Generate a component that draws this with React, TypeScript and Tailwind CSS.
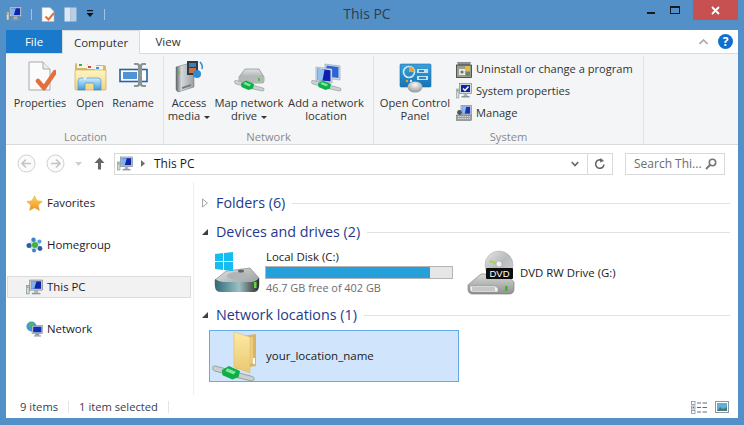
import { ReactNode } from 'react';

function MiniPc({ size = 16 }: { size?: number }) {
  return (
    <svg width={size} height={size} viewBox="0 0 16 16" className="shrink-0">
      <rect x="0.5" y="6" width="2.5" height="8" fill="#d5dadc" stroke="#7d8a8c" strokeWidth="0.6" />
      <rect x="1.2" y="7" width="1" height="1.5" fill="#46c13f" />
      <rect x="3.5" y="1" width="12" height="9.5" fill="#cfd3d6" stroke="#6f7a80" strokeWidth="0.6" />
      <rect x="4.8" y="2.2" width="9.4" height="7" fill="#0f25a8" />
      <path d="M4.8 2.2h5l-2 7h-3z" fill="#7fb2ee" />
      <path d="M8 10.5h3l.6 2.5H7.4z" fill="#aab2b6" />
      <rect x="5.5" y="13" width="8" height="1.4" fill="#8d969b" />
    </svg>
  );
}

function Plug({ x = 0, y = 0 }: { x?: number; y?: number }) {
  return (
    <g transform={`translate(${x} ${y})`}>
      <path d="M0.5 2.5q0-1.5 2-1L12 4l6 2 11 3q1.5.6 1 2t-2 1l-11-2.5-6-2-9-2.5q-1.5-.5-1.5-2z" fill="#c9d2d1" stroke="#8b9695" strokeWidth="0.6" />
      <path d="M7 4.5l5-3 8 3.5-1 4.5-4.500 1.500-7-3z" fill="#0fae48" />
      <path d="M11 3l6 2.500-1.500 2-6-2.500z" fill="#7fe79b" />
    </g>
  );
}

function PropertiesIcon() {
  return (
    <svg width="28" height="30" viewBox="0 0 28 30" className="mb-[2px] ml-[3px]">
      <path d="M1 1h14l7 7v21H1z" fill="#fbfbfb" stroke="#a9a9a9" />
      <path d="M15 1v7h7" fill="#ececec" stroke="#a9a9a9" />
      <path d="M10 20l6 7L27 11" fill="none" stroke="#e2703f" strokeWidth="4.5" strokeLinecap="round" strokeLinejoin="round" />
    </svg>
  );
}

function OpenIcon() {
  return (
    <svg width="33" height="30" viewBox="0 0 33 30" className="mb-[2px]">
      <defs>
        <linearGradient id="folderFace" x1="0" y1="0" x2="0" y2="1">
          <stop offset="0" stopColor="#fff6c4" />
          <stop offset="1" stopColor="#f0d582" />
        </linearGradient>
        <linearGradient id="glass" x1="0" y1="0" x2="0" y2="1">
          <stop offset="0" stopColor="#cfeefc" />
          <stop offset="1" stopColor="#3f9bdc" />
        </linearGradient>
      </defs>
      <path d="M1 4q0-2 2-2h9l2 2h16q2 0 2 2v22H1z" fill="#d9b868" />
      <rect x="3" y="2" width="10" height="5" fill="#f5f5f0" />
      <rect x="5" y="3" width="3" height="2" fill="#3cb03c" />
      <rect x="13" y="4" width="9" height="4" fill="#f5f5f0" />
      <rect x="14" y="5" width="3" height="2" fill="#d24b35" />
      <rect x="21" y="5" width="8" height="4" fill="#f5f5f0" />
      <rect x="22" y="6" width="3" height="2" fill="#3c94da" />
      <path d="M1 9h31v19q0 1-1 1H2q-1 0-1-1z" fill="url(#folderFace)" stroke="#cda95a" strokeWidth="0.7" />
      <path d="M4 29v-9q0-3 3-3h17q3 0 3 3v9h-7v-6q0-1-1-1H12q-1 0-1 1v6z" fill="url(#glass)" stroke="#3f87bd" strokeWidth="0.6" />
      <path d="M8 14l3 3 3-3-3 5z" fill="#fff" />
    </svg>
  );
}

function RenameIcon() {
  return (
    <svg width="29" height="27" viewBox="0 0 29 27" className="mb-[4px]">
      <rect x="1" y="7.5" width="27" height="12" fill="#fff" stroke="#2364a5" strokeWidth="1.6" />
      <rect x="4" y="10" width="14" height="7" fill="#4f95d6" />
      <path d="M15 1h4l2 1.5L23 1h4v2h-3l-1 1v18l1 1h3v2h-4l-2-1.5-2 1.5h-4v-2h3l1-1V4l-1-1h-3z" fill="#8d9498" />
    </svg>
  );
}

function AccessMediaIcon() {
  return (
    <svg width="30" height="33" viewBox="0 0 30 33">
      <defs>
        <linearGradient id="tower" x1="0" y1="0" x2="1" y2="0">
          <stop offset="0" stopColor="#5f6467" />
          <stop offset="0.3" stopColor="#d5d8da" />
          <stop offset="1" stopColor="#9b9fa2" />
        </linearGradient>
      </defs>
      <path d="M2 7l18-5v25l-16 5-2-2z" fill="url(#tower)" stroke="#6d7174" strokeWidth="0.5" />
      <rect x="3.5" y="11" width="2" height="3" fill="#4cc04a" />
      <path d="M8 27l9-3v2l-9 3z" fill="#777b7e" />
      <rect x="13" y="1" width="11" height="14" fill="#2f3b45" />
      <rect x="15" y="3" width="7" height="4" fill="#3d7eb5" />
      <rect x="15" y="8" width="7" height="5" fill="#d0703e" />
      <circle cx="23" cy="14" r="4" fill="#2c8ad6" />
      <path d="M26 2q3 3 2 7" fill="none" stroke="#2c8ad6" strokeWidth="1.5" />
    </svg>
  );
}

function MapDriveIcon() {
  return (
    <svg width="33" height="24" viewBox="0 0 33 24" className="mb-[1px]">
      <defs>
        <linearGradient id="hddGrey" x1="0" y1="0" x2="0" y2="1">
          <stop offset="0" stopColor="#e0e2e2" />
          <stop offset="1" stopColor="#8b8f8f" />
        </linearGradient>
      </defs>
      <path d="M6 9l6-8h14l5 8v4q0 2-2 2H8q-2 0-2-2z" fill="url(#hddGrey)" stroke="#767a7a" strokeWidth="0.6" />
      <path d="M6 9h25v4q0 2-2 2H8q-2 0-2-2z" fill="#b5b8b8" />
      <rect x="25" y="10" width="2" height="3" fill="#3ecb3e" />
      <Plug x={1} y={11} />
    </svg>
  );
}

function AddLocationIcon() {
  return (
    <svg width="33" height="30" viewBox="0 0 33 30" className="mb-[1px]">
      <path d="M15 2l15 2v14l-15-2z" fill="#d7dfe8" stroke="#8f99a5" strokeWidth="0.6" />
      <path d="M16.5 3.5l12 1.5v11l-12-1.5z" fill="#2a64d6" />
      <path d="M6 5l16 2v14L6 19z" fill="#e1e5ea" stroke="#8f99a5" strokeWidth="0.6" />
      <path d="M7.5 6.5l13 1.7v11.3L7.5 18z" fill="#0d20b0" />
      <path d="M7.5 6.5l7 1-2 11-5-.6z" fill="#8fc1f3" />
      <Plug x={1} y={17} />
    </svg>
  );
}

function ControlPanelIcon() {
  return (
    <svg width="33" height="30" viewBox="0 0 33 30">
      <defs>
        <linearGradient id="panelBlue" x1="0" y1="0" x2="0" y2="1">
          <stop offset="0" stopColor="#3aa0dc" />
          <stop offset="1" stopColor="#1773b4" />
        </linearGradient>
        <radialGradient id="mouseGrey" cx="0.5" cy="0.3" r="0.7">
          <stop offset="0" stopColor="#f6f6f6" />
          <stop offset="1" stopColor="#969696" />
        </radialGradient>
      </defs>
      <rect x="1" y="1" width="31" height="23" rx="1" fill="url(#panelBlue)" stroke="#1a6ea8" strokeWidth="0.6" />
      <circle cx="10" cy="9" r="5.5" fill="none" stroke="#d0eaf9" strokeWidth="1.6" />
      <path d="M10 3.5a5.5 5.5 0 0 1 5.5 5.5H10z" fill="#f3a21b" />
      <rect x="18" y="6" width="11" height="4" fill="#bfe2f7" />
      <rect x="20" y="7" width="5" height="2" fill="#2c88c9" />
      <rect x="18" y="13" width="11" height="4" fill="#bfe2f7" />
      <rect x="20" y="14" width="7" height="2" fill="#2c88c9" />
      <circle cx="8" cy="18" r="1.2" fill="#f3a21b" />
      <circle cx="12" cy="18" r="1.2" fill="#cde9f8" />
      <ellipse cx="16" cy="24" rx="7.5" ry="5.5" fill="url(#mouseGrey)" />
    </svg>
  );
}

function UninstallIcon() {
  return (
    <svg width="16" height="17" viewBox="0 0 16 17">
      <path d="M1 1h14l-1 3H2z" fill="#8f8b99" />
      <rect x="0.5" y="4" width="15" height="12.5" fill="#99a08f" stroke="#222" strokeWidth="0.7" />
      <rect x="9" y="5" width="5" height="5" fill="#e0bb45" />
      <rect x="3" y="8" width="6" height="6" fill="#e8e8e8" />
      <circle cx="6" cy="11" r="1.6" fill="#6c7770" />
      <rect x="10" y="11" width="4" height="4" fill="#71826d" />
    </svg>
  );
}

function SystemIcon() {
  return (
    <svg width="16" height="16" viewBox="0 0 16 16">
      <rect x="0.3" y="6" width="2.6" height="9" fill="#d5dadc" stroke="#7d8a8c" strokeWidth="0.5" />
      <rect x="1" y="7" width="1.2" height="1.5" fill="#46c13f" />
      <rect x="3.5" y="0.5" width="12" height="10" fill="#d5d9dc" stroke="#6f7a80" strokeWidth="0.6" />
      <rect x="5" y="2" width="9" height="7" fill="#0f25a8" />
      <path d="M7 5.5l2 2 3.5-4" fill="none" stroke="#fff" strokeWidth="1.4" />
      <path d="M8 10.5h3l.5 2.5H7.5z" fill="#aab2b6" />
      <rect x="5.5" y="13" width="8" height="1.5" fill="#8d969b" />
    </svg>
  );
}

function ManageIcon() {
  return (
    <svg width="16" height="16" viewBox="0 0 16 16">
      <rect x="5" y="0.5" width="10.5" height="9.5" fill="#d5d9dc" stroke="#6f7a80" strokeWidth="0.6" />
      <rect x="6.2" y="1.7" width="8" height="7" fill="#1835b8" />
      <path d="M6.2 1.7h4l-1.5 7H6.2z" fill="#8fbcf0" />
      <rect x="0.5" y="10" width="15" height="5.5" fill="#9ba0a3" stroke="#63686b" strokeWidth="0.5" />
      <path d="M2 11.5h12M2 13.5h12" stroke="#e4e6e7" strokeWidth="0.8" strokeDasharray="1.4 0.8" />
      <circle cx="3.5" cy="7.5" r="2.4" fill="#4b5560" />
    </svg>
  );
}

function StarIcon() {
  return (
    <svg width="17" height="16" viewBox="0 0 17 16">
      <defs>
        <linearGradient id="starFill" x1="0" y1="0" x2="0" y2="1">
          <stop offset="0" stopColor="#ffd650" />
          <stop offset="1" stopColor="#f08f22" />
        </linearGradient>
      </defs>
      <path d="M8.5 0.7l2.4 5 5.4.7-4 3.7 1.1 5.4-4.900-2.700-4.900 2.700 1.100-5.400-4-3.700 5.400-.7z" fill="url(#starFill)" stroke="#e3a345" strokeWidth="0.5" />
    </svg>
  );
}

function HomegroupIcon() {
  return (
    <svg width="17" height="16" viewBox="0 0 17 16">
      <circle cx="8.5" cy="8" r="5.5" fill="#cfe0f0" />
      <circle cx="9" cy="8" r="3" fill="#45b13c" />
      <circle cx="3" cy="8.5" r="2.5" fill="#2a5fa8" />
      <circle cx="7.5" cy="2.8" r="2.2" fill="#3f82c8" />
      <circle cx="13.5" cy="4.5" r="2" fill="#5d9bd8" />
      <circle cx="14" cy="11.5" r="2.4" fill="#2a5fa8" />
      <circle cx="8" cy="13.5" r="2" fill="#3f82c8" />
    </svg>
  );
}

function NetworkIcon() {
  return (
    <svg width="17" height="16" viewBox="0 0 17 16">
      <circle cx="5.5" cy="5.5" r="5" fill="#3f9ad8" />
      <path d="M3 2l3-1 2 2-2 3-3-1zM7 7l2 1-1 2.5-2-.5z" fill="#55b947" />
      <rect x="6" y="4.5" width="10.5" height="8" fill="#c9ced2" stroke="#6f7a80" strokeWidth="0.5" />
      <rect x="7.2" y="5.7" width="8.2" height="5.6" fill="#1230b5" />
      <path d="M9.5 12.5h3.5l.5 2h-4.5z" fill="#8d969b" />
      <rect x="8" y="14.4" width="7" height="1.1" fill="#8d969b" />
    </svg>
  );
}

function LocalDiskIcon() {
  return (
    <svg width="48" height="44" viewBox="0 0 48 44" className="self-end">
      <defs>
        <linearGradient id="diskTop" x1="0" y1="0" x2="1" y2="1">
          <stop offset="0" stopColor="#e2e5e5" />
          <stop offset="1" stopColor="#8c9090" />
        </linearGradient>
        <linearGradient id="diskSide" x1="0" y1="0" x2="1" y2="0">
          <stop offset="0" stopColor="#2f6a78" />
          <stop offset="0.55" stopColor="#9cc0c4" />
          <stop offset="0.8" stopColor="#5e6a6a" />
          <stop offset="1" stopColor="#2d3232" />
        </linearGradient>
      </defs>
      <path d="M2 28l11-9 24-3 9 10v6q0 6-6 6H8q-6 0-6-6z" fill="url(#diskTop)" stroke="#7a8080" strokeWidth="0.6" />
      <path d="M2 27q4 3 8 3h29q4 0 7-4v8q0 6-6 6H8q-6 0-6-6z" fill="url(#diskSide)" />
      <ellipse cx="25" cy="24" rx="11" ry="4" fill="#b1b5b5" />
      <ellipse cx="28" cy="19" rx="3" ry="1.5" fill="#626666" />
      <rect x="41" y="30" width="2.5" height="6" fill="#66d63f" />
      <path d="M2 1l8-1v8H2zM11 0l9-1v9h-9zM2 9h8v8l-8-1zM11 9h9v9l-9-1z" fill="#14bdf0" transform="translate(0 1)" />
    </svg>
  );
}

function DvdIcon() {
  return (
    <svg width="48" height="45" viewBox="0 0 48 45">
      <defs>
        <linearGradient id="disc" x1="0" y1="0" x2="1" y2="1">
          <stop offset="0" stopColor="#e6e6e6" />
          <stop offset="0.5" stopColor="#b8bcbc" />
          <stop offset="1" stopColor="#dcd0dc" />
        </linearGradient>
        <linearGradient id="tray" x1="0" y1="0" x2="0" y2="1">
          <stop offset="0" stopColor="#d8dad8" />
          <stop offset="1" stopColor="#8f928f" />
        </linearGradient>
      </defs>
      <path d="M1 35l13-11h24l9 8v7q0 5-5 5H6q-5 0-5-5z" fill="url(#tray)" stroke="#707470" strokeWidth="0.6" />
      <path d="M3 36h25l3 2v4H6q-3 0-3-3z" fill="#f0f1f0" stroke="#8a8d8a" strokeWidth="0.5" />
      <path d="M5 38h23M5 40h23" stroke="#777" strokeWidth="0.7" />
      <rect x="38" y="36" width="2.5" height="5" fill="#3db535" />
      <circle cx="32" cy="15" r="14" fill="url(#disc)" stroke="#9b9e9e" strokeWidth="0.4" />
      <path d="M23 10l6 2-1 2-6-2z" fill="#a2d44f" />
      <circle cx="32" cy="14" r="3" fill="#f1f1f1" stroke="#a3a6a6" strokeWidth="0.6" />
      <rect x="19" y="18" width="27" height="11" rx="1" fill="#0d0d0d" />
      <text x="32.5" y="27" textAnchor="middle" fontSize="9.5" fill="#fff" fontFamily="Liberation Sans, sans-serif">DVD</text>
    </svg>
  );
}

function NetworkFolderIcon() {
  return (
    <svg width="46" height="50" viewBox="0 0 46 50">
      <defs>
        <linearGradient id="paleFolder" x1="0" y1="0" x2="0" y2="1">
          <stop offset="0" stopColor="#fdeaa3" />
          <stop offset="1" stopColor="#e9c871" />
        </linearGradient>
      </defs>
      <path d="M24 6l20-3v32l-20 3z" fill="#d8b564" />
      <path d="M24 9l17-3v26l-17 4z" fill="#eccd7c" />
      <path d="M22 1l16 5v36l-16-6z" fill="url(#paleFolder)" stroke="#d9bd72" strokeWidth="0.6" />
      <rect x="41" y="27" width="2" height="6" fill="#fdfdfd" />
      <g transform="translate(0 33) scale(1.4)">
        <Plug />
      </g>
    </svg>
  );
}

function RibbonButton({ icon, width, children }: { icon: ReactNode; width: string; children: ReactNode }) {
  return (
    <div className={`flex flex-col items-center ${width}`}>
      <div className="flex h-[37px] items-end justify-center">{icon}</div>
      <div className="mt-[3px] whitespace-nowrap text-center leading-[13px] text-[#333]">{children}</div>
    </div>
  );
}

function Caret() {
  return <span className="ml-1 inline-block border-x-[3px] border-t-[3px] border-x-transparent border-t-[#333] align-middle" />;
}

function RibbonGroup({ label, width, children }: { label: string; width: string; children: ReactNode }) {
  return (
    <div className={`flex h-[88px] shrink-0 flex-col border-r border-[#dfe1e3] ${width}`}>
      <div className="flex flex-1">{children}</div>
      <div className="text-center leading-[15px] text-[#8a8a8a]">{label}</div>
    </div>
  );
}

function SmallAction({ icon, label }: { icon: ReactNode; label: string }) {
  return (
    <div className="flex h-[22px] items-center gap-[4px] text-[#333]">
      <div className="flex w-[16px] justify-center">{icon}</div>
      <span className="whitespace-nowrap">{label}</span>
    </div>
  );
}

function NavItem({ icon, label, selected }: { icon: ReactNode; label: string; selected?: boolean }) {
  return (
    <div className={`flex h-[22px] items-center gap-[4px] border pl-[18px] text-[11.4px] text-[#1a1a2e] ${selected ? 'border-[#dcdcdc] bg-[#f2f2f2]' : 'border-transparent'}`}>
      {icon}
      <span>{label}</span>
    </div>
  );
}

function SectionHeader({ label, open }: { label: string; open?: boolean }) {
  return (
    <div className="flex h-[20px] items-center">
      <div className="flex w-[22px] justify-center">
        {open ? (
          <svg width="8" height="8" viewBox="0 0 8 8">
            <path d="M7 1v6H1z" fill="#3f3f3f" />
          </svg>
        ) : (
          <svg width="8" height="10" viewBox="0 0 8 10">
            <path d="M1.5 1l5 4-5 4z" fill="#fff" stroke="#a6a6a6" />
          </svg>
        )}
      </div>
      <span className="whitespace-nowrap text-[14.3px] text-[#1e3a8f]">{label}</span>
      <div className="ml-[7px] h-px flex-1 bg-[#e2e2e2]" />
    </div>
  );
}

export default function App() {
  return (
    <div className="h-[425px] w-[744px] overflow-hidden bg-[#5390c8] px-[6px] pb-[7px] text-[11.2px] [font-family:'Open_Sans',sans-serif]">
      {/* Title bar */}
      <div className="relative flex h-[30px] items-center">
        <div className="flex items-center gap-[9px] pb-[2px]">
          <MiniPc />
          <div className="h-[11px] w-px bg-[#9fc3e2]" />
          <svg width="14" height="15" viewBox="0 0 14 15">
            <path d="M1 0.5h8l4 4v10H1z" fill="#fbfbfb" stroke="#b5b5b5" strokeWidth="0.6" />
            <path d="M4.5 9.5l3 3L13 6" fill="none" stroke="#e2703f" strokeWidth="2" />
          </svg>
          <svg width="13" height="15" viewBox="0 0 13 15">
            <rect x="0.5" y="0.5" width="6" height="14" fill="#dfe8f2" />
            <rect x="6.5" y="0.5" width="6" height="14" fill="#bacde2" />
          </svg>
          <svg width="8" height="8" viewBox="0 0 8 8">
            <rect x="1" y="0" width="6" height="1.2" fill="#111" />
            <path d="M0.5 3h7L4 7z" fill="#111" />
          </svg>
          <div className="ml-[1px] h-[11px] w-px bg-[#9fc3e2]" />
        </div>
        <div className="absolute left-0 right-[10px] top-[3px] text-center text-[14px] text-[#2f3d4a]">This PC</div>
        <div className="ml-auto flex h-[20px] items-start self-start">
          <div className="mr-[15px] mt-[12px] h-[2px] w-[8px] bg-[#1a1a1a]" />
          <div className="mr-[13px] mt-[6px] h-[8px] w-[10px] border border-t-2 border-[#1a1a1a]" />
          <div className="flex h-[20px] w-[45px] items-center justify-center bg-[#c75050]">
            <svg width="9" height="9" viewBox="0 0 9 9">
              <path d="M1 1l7 7M8 1L1 8" stroke="#fff" strokeWidth="1.8" />
            </svg>
          </div>
        </div>
      </div>

      <div className="flex h-[388px] flex-col bg-white">
        {/* Tabs */}
        <div className="flex h-[24px] shrink-0 items-stretch border-b border-[#dadbdc] text-[11.5px]">
          <div className="flex w-[56px] items-center justify-center bg-[#1979ca] text-white">File</div>
          <div className="-mb-px flex w-[78px] items-center justify-center border-x border-t border-[#dadbdc] bg-[#f4f5f7] text-[#333]">Computer</div>
          <div className="flex w-[56px] items-center justify-center text-[#333]">View</div>
          <div className="ml-auto flex items-center gap-[10px] pr-[5px]">
            <svg width="9" height="6" viewBox="0 0 9 6">
              <path d="M0.5 5L4.5 1l4 4" fill="none" stroke="#a9a9a9" strokeWidth="1.6" />
            </svg>
            <div className="flex h-[15px] w-[15px] items-center justify-center rounded-full bg-[#1170cf] text-[12px] font-bold leading-none text-white">?</div>
          </div>
        </div>

        {/* Ribbon */}
        <div className="flex h-[91px] shrink-0 items-start border-b border-[#dadbdc] bg-[#f4f5f7] pt-[2px]">
          <RibbonGroup label="Location" width="w-[158px] pl-[2px] text-[10.8px]">
            <RibbonButton icon={<PropertiesIcon />} width="w-[64px]">Properties</RibbonButton>
            <RibbonButton icon={<OpenIcon />} width="w-[36px]">Open</RibbonButton>
            <RibbonButton icon={<RenameIcon />} width="w-[50px]">Rename</RibbonButton>
          </RibbonGroup>
          <RibbonGroup label="Network" width="w-[210px]">
            <RibbonButton icon={<AccessMediaIcon />} width="w-[50px]">Access<br />media<Caret /></RibbonButton>
            <RibbonButton icon={<MapDriveIcon />} width="w-[70px]">Map network<br />drive<Caret /></RibbonButton>
            <RibbonButton icon={<AddLocationIcon />} width="w-[84px]">Add a network<br />location</RibbonButton>
          </RibbonGroup>
          <RibbonGroup label="System" width="w-[270px]">
            <RibbonButton icon={<ControlPanelIcon />} width="w-[82px]">Open Control<br />Panel</RibbonButton>
            <div className="flex flex-col pt-[2px] text-[11.1px]">
              <SmallAction icon={<UninstallIcon />} label="Uninstall or change a program" />
              <SmallAction icon={<SystemIcon />} label="System properties" />
              <SmallAction icon={<ManageIcon />} label="Manage" />
            </div>
          </RibbonGroup>
        </div>

        {/* Address bar */}
        <div className="flex h-[37px] shrink-0 items-center pl-[11px] pr-[13px]">
          <svg width="19" height="19" viewBox="0 0 19 19">
            <circle cx="9.5" cy="9.5" r="8.5" fill="#fbfbfb" stroke="#cfcfcf" />
            <path d="M14 9.5H5.5M9 5.5l-4 4 4 4" fill="none" stroke="#c4c4c4" strokeWidth="1.6" />
          </svg>
          <svg width="19" height="19" viewBox="0 0 19 19" className="ml-[10px]">
            <circle cx="9.5" cy="9.5" r="8.5" fill="#fbfbfb" stroke="#cfcfcf" />
            <path d="M5 9.5h8.5M10 5.5l4 4-4 4" fill="none" stroke="#c4c4c4" strokeWidth="1.6" />
          </svg>
          <svg width="7" height="4" viewBox="0 0 7 4" className="ml-[10px]">
            <path d="M0 0h7L3.5 4z" fill="#cfcfcf" />
          </svg>
          <svg width="11" height="13" viewBox="0 0 11 13" className="ml-[12px]">
            <path d="M5.5 0.5L10.5 6H7v6.500H4V6H0.5z" fill="#666" />
          </svg>
          <div className="ml-[9px] flex h-[22px] w-[499px] items-center border border-[#d9d9d9] text-[12px] text-[#1a1a1a]">
            <div className="ml-[2px]"><MiniPc /></div>
            <svg width="4" height="7" viewBox="0 0 4 7" className="ml-[8px]">
              <path d="M0 0l4 3.5L0 7z" fill="#6d6d6d" />
            </svg>
            <span className="ml-[9px]">This PC</span>
            <div className="ml-auto flex h-full w-[24px] items-center justify-center">
              <svg width="8" height="6" viewBox="0 0 8 6">
                <path d="M0.7 1L4 4.5 7.3 1" fill="none" stroke="#666" strokeWidth="1.6" />
              </svg>
            </div>
            <div className="flex h-full w-[25px] items-center justify-center border-l border-[#d9d9d9]">
              <svg width="12" height="12" viewBox="0 0 12 12">
                <path d="M10 6.5a4.2 4.2 0 1 1-2-4" fill="none" stroke="#666" strokeWidth="1.6" />
                <path d="M6.5 0l3.5 3-4 1.5z" fill="#666" />
              </svg>
            </div>
          </div>
          <div className="ml-auto flex h-[22px] w-[100px] items-center justify-between border border-[#d9d9d9] pl-[8px] pr-[7px] text-[12px] text-[#6d6d6d]">
            <span className="whitespace-nowrap">Search Thi...</span>
            <svg width="12" height="12" viewBox="0 0 12 12">
              <circle cx="7.5" cy="4.5" r="3.2" fill="none" stroke="#777" strokeWidth="1.6" />
              <path d="M5 7l-4 4" stroke="#777" strokeWidth="2" />
            </svg>
          </div>
        </div>

        {/* Main */}
        <div className="flex min-h-0 flex-1">
          <div className="w-[188px] shrink-0 border-r border-[#eeeeee] pl-[1px] pr-[2px]">
            <div className="flex flex-col gap-[20px] pt-[10px]">
              <NavItem icon={<StarIcon />} label="Favorites" />
              <NavItem icon={<HomegroupIcon />} label="Homegroup" />
              <NavItem icon={<MiniPc size={17} />} label="This PC" selected />
              <NavItem icon={<NetworkIcon />} label="Network" />
            </div>
          </div>
          <div className="flex-1 pr-[8px] pt-[11px]">
            <SectionHeader label="Folders (6)" />
            <div className="mt-[9px]">
              <SectionHeader label="Devices and drives (2)" open />
            </div>
            <div className="ml-[14px] flex h-[61px] items-start pt-[7px]">
              <div className="flex h-[47px] w-[259px] items-center gap-[4px] pl-[5px]">
                <LocalDiskIcon />
                <div className="w-[188px]">
                  <div className="pl-[1px] text-[11.4px] leading-[16px] text-[#1a1a1a]">Local Disk (C:)</div>
                  <div className="mt-[1px] h-[13px] w-full border border-[#b5b5b5] bg-[#e6e6e6]">
                    <div className="h-full bg-[#26a0da]" style={{ width: '88%' }} />
                  </div>
                  <div className="pl-[1px] text-[10.9px] leading-[17px] text-[#6d6d6d]">46.7 GB free of 402 GB</div>
                </div>
              </div>
              <div className="flex h-[47px] items-center gap-[5px]">
                <DvdIcon />
                <span className="text-[11.4px] text-[#1a1a1a]">DVD RW Drive (G:)</span>
              </div>
            </div>
            <div className="mt-[2px]">
              <SectionHeader label="Network locations (1)" open />
            </div>
            <div className="ml-[15px] mt-[5px] flex h-[52px] w-[250px] items-center gap-[3px] border border-[#67a9e6] bg-[#d0e5fb] pl-[2px] text-[11.5px] text-[#1a1a1a]">
              <NetworkFolderIcon />
              <span className="ml-[5px]">your_location_name</span>
            </div>
          </div>
        </div>

        {/* Status bar */}
        <div className="flex h-[23px] shrink-0 items-center pl-[14px] pr-[9px] pt-[1px] text-[#3c3c50]">
          <span>9 items</span>
          <div className="mx-[10px] h-[12px] w-px bg-[#e4e4e4]" />
          <span>1 item selected</span>
          <div className="ml-[10px] h-[12px] w-px bg-[#e4e4e4]" />
          <div className="ml-auto flex items-center gap-[7px]">
            <svg width="17" height="13" viewBox="0 0 17 13">
              <rect x="0.5" y="0.5" width="3.5" height="3" fill="#fff" stroke="#7f8fa3" strokeWidth="0.8" />
              <rect x="0.5" y="5" width="3.5" height="3" fill="#fff" stroke="#7f8fa3" strokeWidth="0.8" />
              <rect x="1.6" y="6" width="1.4" height="1" fill="#d23b3b" />
              <rect x="0.5" y="9.5" width="3.5" height="3" fill="#fff" stroke="#7f8fa3" strokeWidth="0.8" />
              <path d="M6 2h4M11.5 2H16M6 6.5h4M11.5 6.5H16M6 11h4M11.5 11H16" stroke="#5f6c7b" />
            </svg>
            <svg width="14" height="12" viewBox="0 0 14 12">
              <rect x="0.5" y="0.5" width="13" height="11" fill="#fff" stroke="#8a97a6" />
              <rect x="2" y="2" width="10" height="8" fill="#5fb0dc" />
              <path d="M2 10l3-4 3 2 4-2v4z" fill="#4a7c74" />
            </svg>
          </div>
        </div>
      </div>
    </div>
  );
}
